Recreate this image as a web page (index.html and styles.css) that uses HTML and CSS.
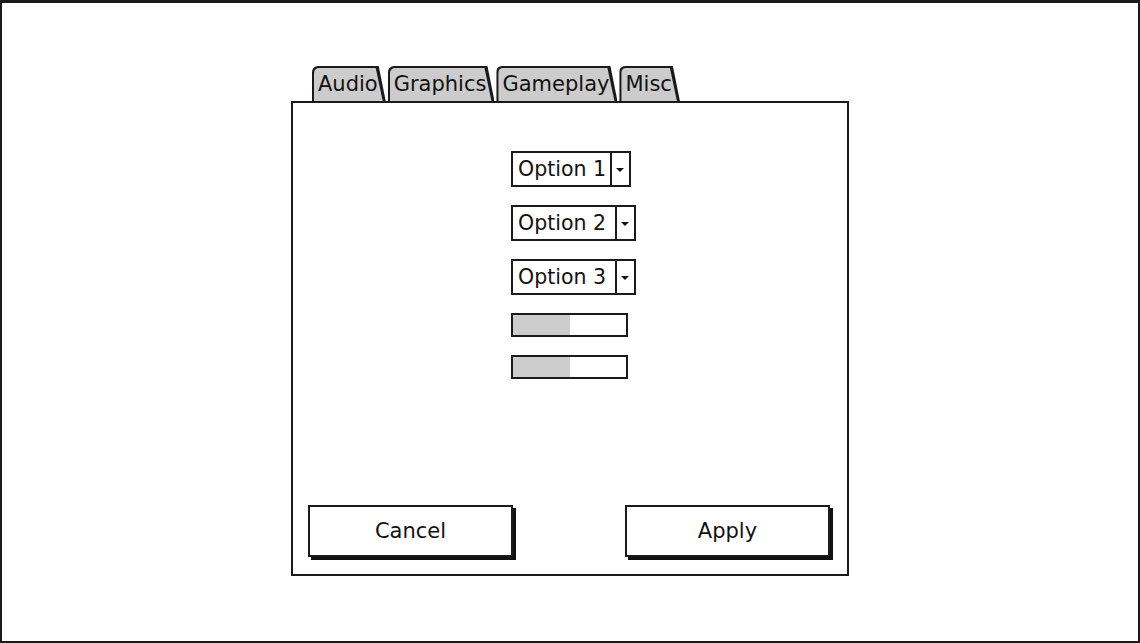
FILE: index.html
```html
<!DOCTYPE html>
<html lang="en">
<head>
<meta charset="utf-8">
<title>Settings</title>
<link rel="stylesheet" href="styles.css">
</head>
<body>
<div class="screen">
  <div class="dialog">
    <div class="tabs">
      <div class="tab"><div class="tab-face">Audio</div></div>
      <div class="tab"><div class="tab-face">Graphics</div></div>
      <div class="tab"><div class="tab-face">Gameplay</div></div>
      <div class="tab"><div class="tab-face">Misc</div></div>
    </div>
    <div class="panel">
      <div class="controls">
        <div class="select"><span class="select-value">Option 1</span><span class="select-arrow"></span></div>
        <div class="select"><span class="select-value">Option 2</span><span class="select-arrow"></span></div>
        <div class="select"><span class="select-value">Option 3</span><span class="select-arrow"></span></div>
        <div class="slider"><div class="slider-fill" style="width: 50%"></div></div>
        <div class="slider"><div class="slider-fill" style="width: 50%"></div></div>
      </div>
      <div class="actions">
        <button class="btn">Cancel</button>
        <button class="btn">Apply</button>
      </div>
    </div>
  </div>
</div>
</body>
</html>
```

FILE: styles.css
```css
* { box-sizing: border-box; }
html, body { margin: 0; padding: 0; background: #fff; }
body { font-family: "DejaVu Sans", "Liberation Sans", sans-serif; color: #111; }

.screen {
  width: 1140px;
  height: 643px;
  border: 2px solid #1a1a1a;
  border-top-width: 3px;
  display: flex;
  justify-content: center;
  align-items: flex-start;
  padding-top: 63px;
}

.dialog {
  width: 558px;
  display: flex;
  flex-direction: column;
}

.tabs {
  display: flex;
  gap: 2px;
  padding-left: 21px;
  height: 35px;
}

.tab {
  background: #1a1a1a;
  padding: 2px 2px 0 2px;
  border-radius: 6px 6px 0 0;
  clip-path: polygon(0 0, calc(100% - 7px) 0, 100% 100%, 0 100%);
}

.tab-face {
  height: 100%;
  background: #cccccc;
  border-radius: 5px 5px 0 0;
  clip-path: polygon(0 0, calc(100% - 8px) 0, calc(100% - 1px) 100%, 0 100%);
  padding: 0 6px 0 4px;
  font-size: 21px;
  line-height: 32px;
}

.panel {
  height: 475px;
  border: 2px solid #1a1a1a;
  display: flex;
  flex-direction: column;
}

.controls {
  display: flex;
  flex-direction: column;
  align-items: flex-start;
  gap: 18px;
  padding: 48px 0 0 218px;
}

.select {
  display: flex;
  height: 36px;
  border: 2px solid #1a1a1a;
  background: #fff;
}

.select-value {
  font-size: 20.5px;
  line-height: 32px;
  padding: 0 4px 0 5px;
  border-right: 2px solid #1a1a1a;
}

.select:nth-child(2) .select-value,
.select:nth-child(3) .select-value { padding-right: 9px; }

.select-arrow {
  width: 17px;
  display: flex;
  align-items: center;
  justify-content: center;
}
.select-arrow::after {
  content: "";
  border-left: 4px solid transparent;
  border-right: 4px solid transparent;
  border-top: 4px solid #111;
  margin-top: 2px;
}

.slider {
  width: 117px;
  height: 24px;
  border: 2px solid #1a1a1a;
  background: #fff;
  display: flex;
}
.slider-fill { background: #cccccc; height: 100%; }

.actions {
  margin-top: auto;
  display: flex;
  justify-content: space-between;
  padding: 0 17px 17px 15px;
}

.btn {
  width: 205px;
  height: 52px;
  border: 2px solid #1a1a1a;
  background: #fff;
  box-shadow: 3px 3px 0 #111;
  font-family: "DejaVu Sans", "Liberation Sans", sans-serif;
  font-size: 21px;
  color: #111;
  padding: 0;
}
```
